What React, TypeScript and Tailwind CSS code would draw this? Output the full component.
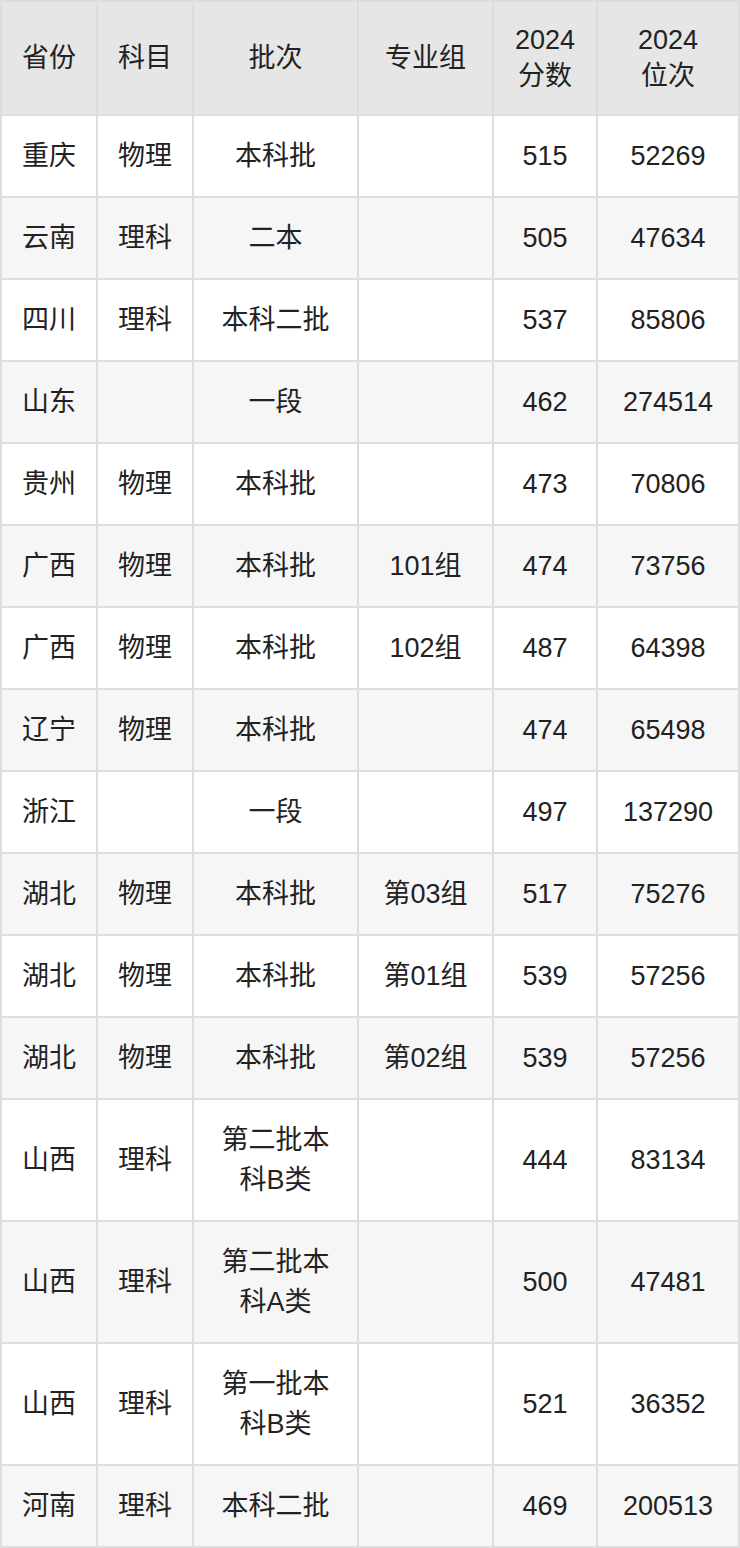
import React from "react";

type Row = {
  province: string;
  subject: string;
  batch: string;
  group: string;
  score: string;
  rank: string;
};

const rows: Row[] = [
  { province: "重庆", subject: "物理", batch: "本科批", group: "", score: "515", rank: "52269" },
  { province: "云南", subject: "理科", batch: "二本", group: "", score: "505", rank: "47634" },
  { province: "四川", subject: "理科", batch: "本科二批", group: "", score: "537", rank: "85806" },
  { province: "山东", subject: "", batch: "一段", group: "", score: "462", rank: "274514" },
  { province: "贵州", subject: "物理", batch: "本科批", group: "", score: "473", rank: "70806" },
  { province: "广西", subject: "物理", batch: "本科批", group: "101组", score: "474", rank: "73756" },
  { province: "广西", subject: "物理", batch: "本科批", group: "102组", score: "487", rank: "64398" },
  { province: "辽宁", subject: "物理", batch: "本科批", group: "", score: "474", rank: "65498" },
  { province: "浙江", subject: "", batch: "一段", group: "", score: "497", rank: "137290" },
  { province: "湖北", subject: "物理", batch: "本科批", group: "第03组", score: "517", rank: "75276" },
  { province: "湖北", subject: "物理", batch: "本科批", group: "第01组", score: "539", rank: "57256" },
  { province: "湖北", subject: "物理", batch: "本科批", group: "第02组", score: "539", rank: "57256" },
  { province: "山西", subject: "理科", batch: "第二批本科B类", group: "", score: "444", rank: "83134" },
  { province: "山西", subject: "理科", batch: "第二批本科A类", group: "", score: "500", rank: "47481" },
  { province: "山西", subject: "理科", batch: "第一批本科B类", group: "", score: "521", rank: "36352" },
  { province: "河南", subject: "理科", batch: "本科二批", group: "", score: "469", rank: "200513" },
];

const th = "border-r-2 border-b-2 border-[#dddddd] bg-[#e6e6e6] px-4 py-5 text-center font-normal leading-[36px]";
const td = "border-r-2 border-b-2 border-[#dddddd] px-4 py-5 text-center leading-[40px]";

export default function App() {
  return (
    <div
      className="w-[740px] bg-white text-[27px] text-[#222222]"
      style={{ fontFamily: '"Liberation Sans", "Noto Sans CJK SC", sans-serif' }}
    >
      <table className="w-[740px] table-fixed border-separate border-spacing-0 border-l-2 border-t-2 border-[#dddddd]">
        <colgroup>
          <col className="w-[96px]" />
          <col className="w-[96px]" />
          <col className="w-[165px]" />
          <col className="w-[135px]" />
          <col className="w-[104px]" />
          <col className="w-[142px]" />
        </colgroup>
        <thead>
          <tr>
            <th className={th}>省份</th>
            <th className={th}>科目</th>
            <th className={th}>批次</th>
            <th className={th}>专业组</th>
            <th className={th}>
              2024
              <br />
              分数
            </th>
            <th className={th}>
              2024
              <br />
              位次
            </th>
          </tr>
        </thead>
        <tbody>
          {rows.map((r, i) => (
            <tr key={i} className={i % 2 === 1 ? "bg-[#f6f6f6]" : "bg-white"}>
              <td className={td}>{r.province}</td>
              <td className={td}>{r.subject}</td>
              <td className={td}>{r.batch}</td>
              <td className={td}>{r.group}</td>
              <td className={td}>{r.score}</td>
              <td className={td}>{r.rank}</td>
            </tr>
          ))}
        </tbody>
      </table>
    </div>
  );
}
